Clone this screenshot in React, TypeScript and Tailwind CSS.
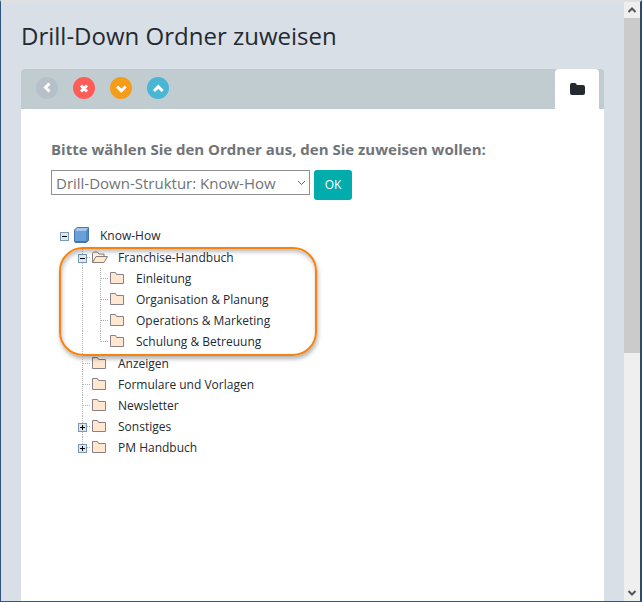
import React, { useState } from 'react'
import { clsx } from 'clsx'

interface TreeNode {
  id: string
  label: string
  expandable?: boolean
  highlighted?: boolean
  children?: TreeNode[]
}

const TREE: TreeNode = {
  id: 'know-how',
  label: 'Know-How',
  expandable: true,
  children: [
    {
      id: 'franchise',
      label: 'Franchise-Handbuch',
      expandable: true,
      highlighted: true,
      children: [
        { id: 'einleitung', label: 'Einleitung' },
        { id: 'organisation', label: 'Organisation & Planung' },
        { id: 'operations', label: 'Operations & Marketing' },
        { id: 'schulung', label: 'Schulung & Betreuung' }
      ]
    },
    { id: 'anzeigen', label: 'Anzeigen' },
    { id: 'formulare', label: 'Formulare und Vorlagen' },
    { id: 'newsletter', label: 'Newsletter' },
    { id: 'sonstiges', label: 'Sonstiges', expandable: true },
    { id: 'pm', label: 'PM Handbuch', expandable: true }
  ]
}

const ACTIONS = [
  { id: 'back', title: 'Zurück', color: 'bg-[#b5c0c8]', path: 'M13.5 6.5 9.5 10.500l4 4' },
  { id: 'cancel', title: 'Abbrechen', color: 'bg-[#ff5b57]', path: 'm8 8.500 6 6m0-6-6 6' },
  { id: 'down', title: 'Nach unten', color: 'bg-[#f59c1a]', path: 'm7 9.500 4.300 4.300 4.300-4.300' },
  { id: 'up', title: 'Nach oben', color: 'bg-[#49b6d6]', path: 'm7 14 4.300-4.300L15.600 14' }
]

function BookIcon() {
  return (
    <svg width="18" height="18" viewBox="0 0 18 18" className="shrink-0">
      <path d="M4 .5h11.500v13L13 15.500H2.500a1 1 0 0 1-1-1V3z" fill="#5088c4" stroke="#4a76ab" />
      <path d="M4 1h11l-2 3H2z" fill="#a5c9ee" />
      <path d="M2 4h11v10H2z" fill="#6b9fd8" />
      <path d="M2.500 14.500h11l1.500-1" fill="none" stroke="#4474aa" />
    </svg>
  )
}

function FolderIcon({ open }: { open: boolean }) {
  return (
    <svg width="18" height="18" viewBox="0 0 18 18" className="shrink-0" strokeLinejoin="round">
      {open ? (
        <>
          <path d="M1.5 13.5v-9l1-1.500h4l1.500 2h5v3" fill="#fff4e4" stroke="#85807c" />
          <path d="M1.5 13.500 5 7.500h11.500l-3.500 6z" fill="#ffe8cc" stroke="#85807c" />
        </>
      ) : (
        <path d="M1.5 4V2.500h5l1 2h7v9h-13z" fill="#ffe8cf" stroke="#8a8184" />
      )}
    </svg>
  )
}

// Dotted connector: 'pass' runs straight through, 'tee' and 'end' branch to the right
function Guide({ kind }: { kind: 'pass' | 'tee' | 'end' }) {
  return (
    <svg width="18" height="21" viewBox="0 0 18 21" className="shrink-0" stroke="#b4b4b4" strokeDasharray="1 1">
      <path d={kind === 'end' ? 'M9.5 0v11' : 'M9.5 0v21'} />
      {kind !== 'pass' && <path d="M10 10.5h8" />}
    </svg>
  )
}

function ToggleIcon({ open }: { open: boolean }) {
  return (
    <svg width="9" height="9" viewBox="0 0 9 9" className="block">
      <rect x="0.5" y="0.5" width="8" height="8" fill="#dfe7ee" stroke="#7898b5" />
      <path d={open ? 'M2 4.5h5' : 'M2 4.5h5M4.5 2v5'} stroke="#000" />
    </svg>
  )
}

interface TreeItemProps {
  node: TreeNode
  last: boolean
  depth: number
}

function TreeItem({ node, last, depth }: TreeItemProps) {
  const [open, setOpen] = useState(Boolean(node.children))
  const isRoot = depth === 0

  return (
    <li className={clsx(node.highlighted && 'relative pb-px')}>
      <div className={clsx('flex items-center', isRoot ? 'h-[22px]' : 'h-[21px]')}>
        {/* Guides of the ancestors */}
        {depth > 0 && <span className="w-[18px] shrink-0" />}
        {depth > 1 && <Guide kind="pass" />}
        <span className="relative flex h-full w-[18px] shrink-0 items-center justify-center">
          {!isRoot && <Guide kind={last ? 'end' : 'tee'} />}
          {node.expandable && (
            <button
              type="button"
              aria-label={node.label}
              aria-expanded={open}
              onClick={() => setOpen(!open)}
              className="absolute inset-0 flex items-center justify-center pt-px pl-px"
            >
              <ToggleIcon open={open} />
            </button>
          )}
        </span>
        {isRoot ? <BookIcon /> : <FolderIcon open={open && Boolean(node.children)} />}
        <a href="#" className="pl-[9px] whitespace-nowrap">{node.label}</a>
      </div>

      {open && node.children && (
        <ul>
          {node.children.map((child, i) => (
            <TreeItem key={child.id} node={child} depth={depth + 1} last={i === node.children!.length - 1} />
          ))}
        </ul>
      )}

      {node.highlighted && (
        <span className="pointer-events-none absolute top-0 left-1 -bottom-[3px] w-[258px] rounded-[24px] border-2 border-[#f7820f] shadow-[1px_3px_4px_rgba(0,0,0,0.3),inset_1px_3px_4px_rgba(0,0,0,0.25)]" />
      )}
    </li>
  )
}

function ScrollBar() {
  return (
    <div className="flex w-4 shrink-0 flex-col bg-[#efefef]">
      <button type="button" aria-label="Hoch" className="flex h-4 items-center justify-center">
        <svg width="10" height="8" viewBox="0 0 10 8" fill="none" stroke="#555" strokeWidth="2">
          <path d="m1.5 6 3.5-3.5L8.5 6" />
        </svg>
      </button>
      <div className="flex-[59] bg-[#cbcbcb]" />
      <div className="flex-[41]" />
      <button type="button" aria-label="Runter" className="flex h-4 items-center justify-center">
        <svg width="10" height="8" viewBox="0 0 10 8" fill="none" stroke="#555" strokeWidth="2">
          <path d="M1.5 2 5 5.5 8.5 2" />
        </svg>
      </button>
    </div>
  )
}

export default function App() {
  return (
    <div className="flex min-h-screen border-t-2 border-r-2 border-b border-l border-t-[#e0e0e0] border-r-[#2f4a66] border-b-[#3c5572] border-l-[#2f5480] bg-[#d8dfe7] font-['Open_Sans',sans-serif]">
      <main className="flex min-w-0 flex-1 flex-col px-5 pt-[18px]">
        <h1 className="text-2xl text-[#242a30]">Drill-Down Ordner zuweisen</h1>

        <section className="mt-[17px] flex flex-1 flex-col rounded-t-[3px] bg-white">
          {/* Toolbar */}
          <header className="flex h-10 justify-between rounded-t-[3px] bg-[#c1ccd1] pr-[5px] pl-[15px]">
            <div className="flex gap-[15px] pt-2">
              {ACTIONS.map((action) => (
                <button
                  key={action.id}
                  type="button"
                  title={action.title}
                  className={clsx('h-[22px] w-[22px] rounded-full', action.color)}
                >
                  <svg width="22" height="22" viewBox="0 0 22 22" fill="none" stroke="#fff" strokeWidth="3">
                    <path d={action.path} />
                  </svg>
                </button>
              ))}
            </div>
            <button type="button" title="Ordner" className="flex w-11 items-center justify-center rounded-t-[4px] bg-white">
              <svg width="15" height="12" viewBox="0 0 15 12" fill="#242a30">
                <path d="M0 2a2 2 0 0 1 2-2h2.7a2 2 0 0 1 2 2h6.3a2 2 0 0 1 2 2v6a2 2 0 0 1-2 2H2a2 2 0 0 1-2-2z" />
              </svg>
            </button>
          </header>

          <div className="px-[30px] pt-[30px]">
            <form onSubmit={(e) => e.preventDefault()}>
              <label htmlFor="structure" className="block text-[15px] leading-5 font-bold text-[#707478]">
                Bitte wählen Sie den Ordner aus, den Sie zuweisen wollen:
              </label>
              <div className="mt-[11px] flex items-start gap-1">
                <div className="relative">
                  <select
                    id="structure"
                    className="block h-[25px] w-[259px] appearance-none border border-[#8f8f8f] bg-white pl-1 text-[15px] leading-5 text-[#707478]"
                  >
                    <option>Drill-Down-Struktur: Know-How</option>
                  </select>
                  <svg
                    width="9"
                    height="6"
                    viewBox="0 0 9 6"
                    fill="none"
                    stroke="#666"
                    className="pointer-events-none absolute top-2.5 right-1"
                  >
                    <path d="m1 1 3.5 3.5L8 1" />
                  </svg>
                </div>
                <button type="submit" className="h-[30px] w-[38px] rounded-[3px] bg-[#00acac] text-xs text-white">
                  OK
                </button>
              </div>
            </form>

            {/* Folder tree */}
            <ul className="mt-[25px] ml-1 text-xs text-[#242a30]">
              <TreeItem node={TREE} depth={0} last />
            </ul>
          </div>
        </section>
      </main>
      <ScrollBar />
    </div>
  )
}
